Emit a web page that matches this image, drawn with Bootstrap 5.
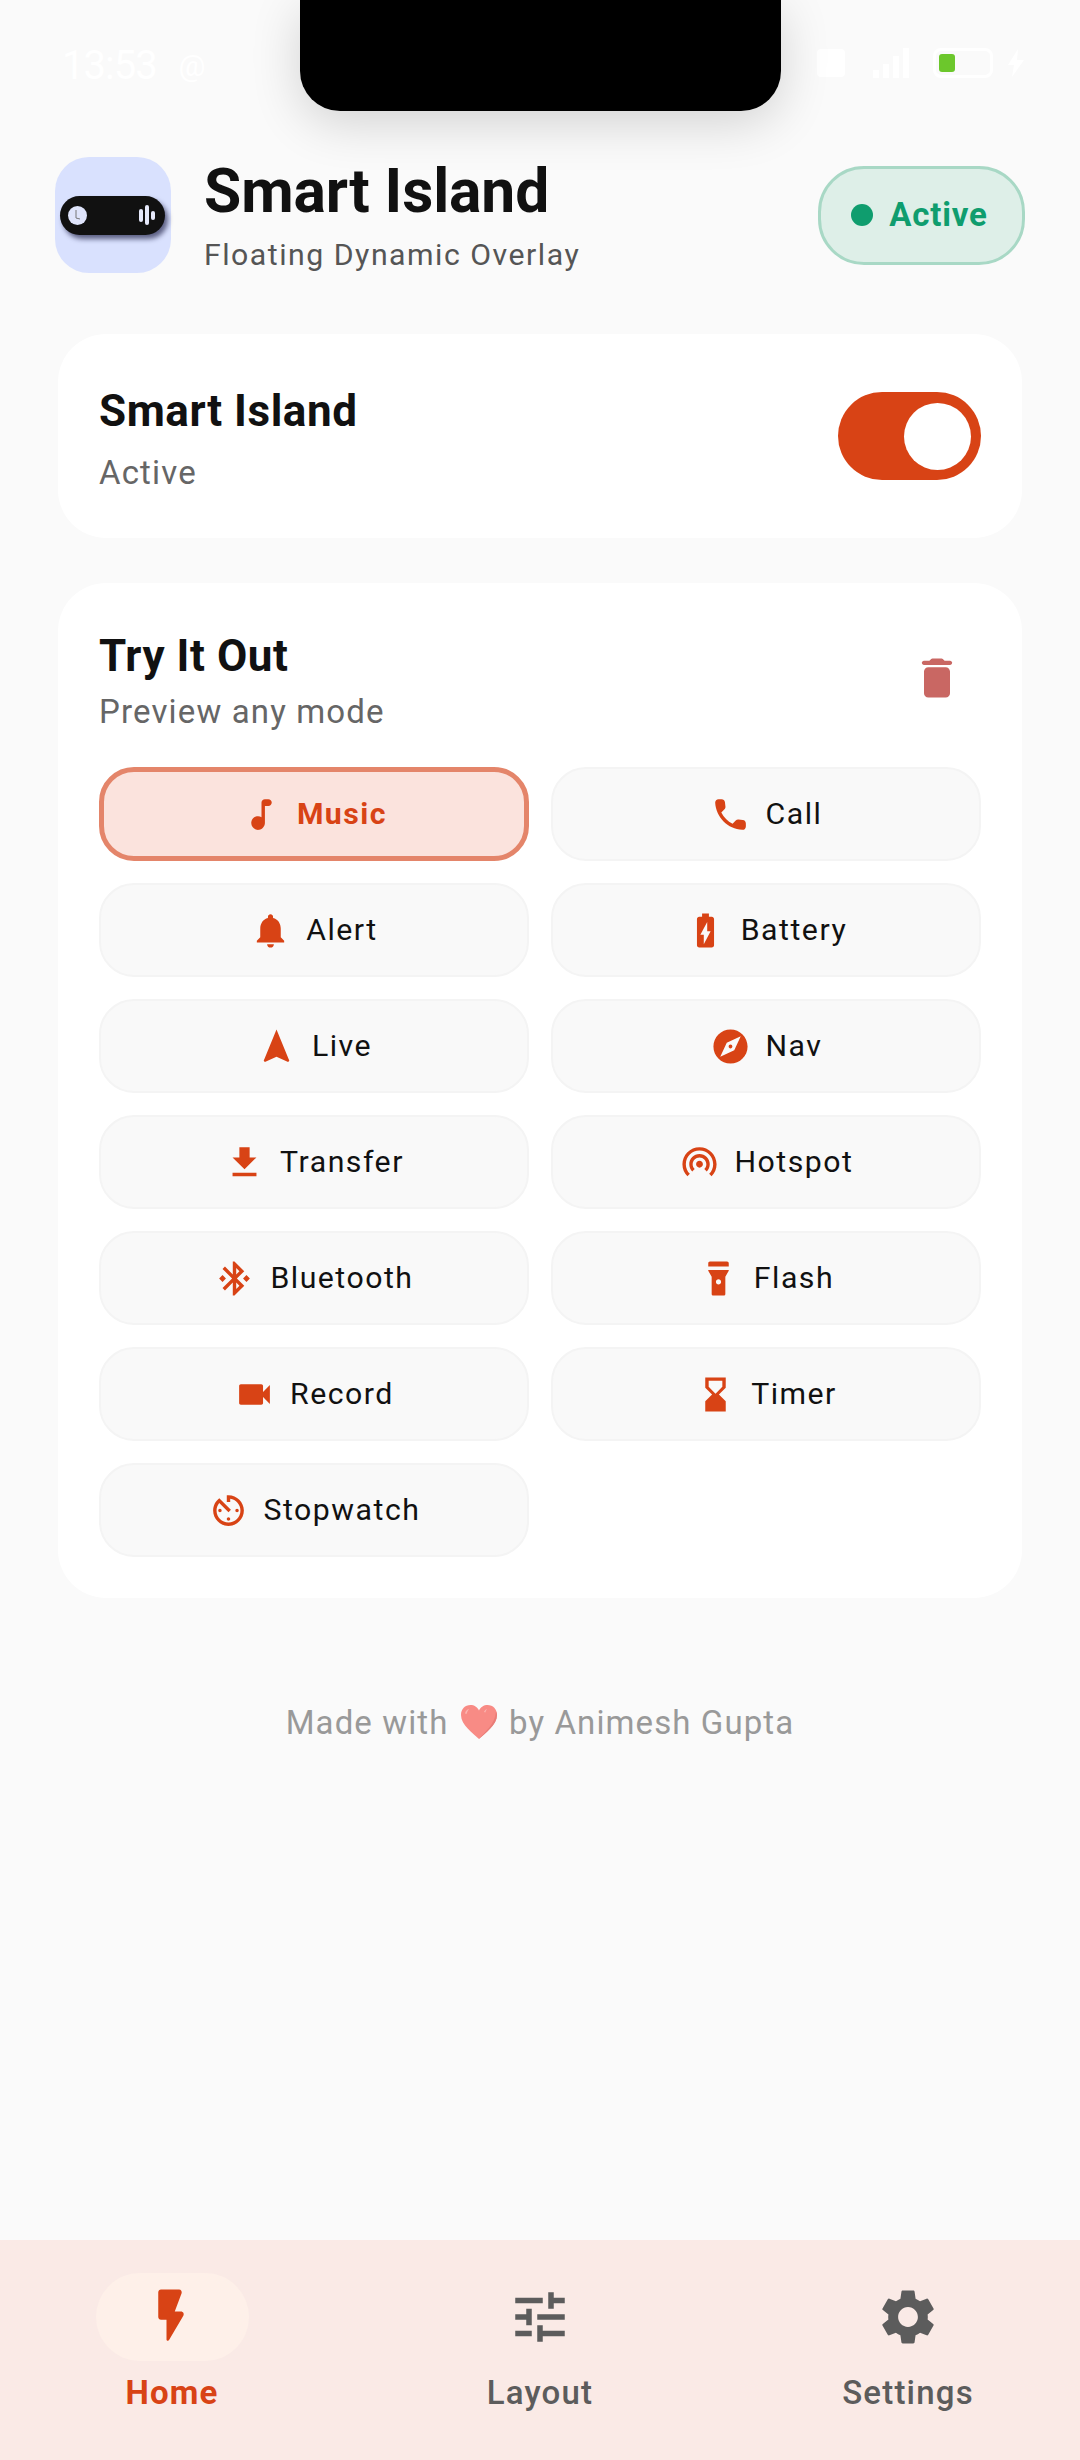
<!DOCTYPE html>
<html lang="en">
<head>
    <meta charset="UTF-8">
    <meta name="viewport" content="width=device-width, initial-scale=1.0">
    <title>Smart Island</title>
    <link href="https://cdn.jsdelivr.net/npm/bootstrap@5.3.0/dist/css/bootstrap.min.css" rel="stylesheet">
    <style>
        body { background: #fafafa; font-family: Roboto, "Liberation Sans", sans-serif; color: #111; }
        .screen { height: 2460px; overflow: hidden; }
        .status-row { height: 157px; padding: 48px 55px 0 62px; color: #fff; flex-shrink: 0; }
        .status-time { font-size: 40px; line-height: 36px; letter-spacing: -1px; }
        .status-at { font-size: 30px; line-height: 36px; margin-left: 22px; }
        .status-vo { width: 28px; height: 28px; background: #fff; border-radius: 4px; margin-right: 8px; }
        .status-net { width: 62px; height: 30px; margin-right: 18px; }
        .status-batt { width: 60px; height: 30px; border: 3px solid #fff; border-radius: 8px; padding: 3px; }
        .status-fill { width: 16px; height: 100%; background: #6cc72c; border-radius: 3px; }
        .status-bolt { width: 18px; height: 28px; margin-left: 14px; }
        .notch { position: absolute; top: 0; left: 300px; width: 481px; height: 111px; background: #000; border-radius: 0 0 40px 40px; box-shadow: 0 12px 50px rgba(0,0,0,.16); }

        .top-head { padding: 0 55px; height: 116px; margin-bottom: 61px; flex-shrink: 0; }
        .app-logo { width: 116px; height: 116px; background: #d9e1fe; border-radius: 34px; padding: 0 6px 0 5px; flex-shrink: 0; }
        .logo-pill { width: 100%; height: 39px; background: #111; border-radius: 20px; padding: 0 10px 0 8px; box-shadow: 3px 4px 5px rgba(10,10,50,.6); }
        .logo-dot { width: 19px; height: 19px; }
        .logo-bar { width: 4px; background: #e6e9fb; border-radius: 2px; margin-left: 2px; }
        .app-title { font-size: 60.5px; line-height: 66px; font-weight: 700; letter-spacing: -.1px; margin: 0; color: #111; }
        .app-sub { font-size: 30.25px; line-height: 32px; color: #555; letter-spacing: 1.5px; margin-top: 14px; }
        .head-text { margin-left: 33px; margin-top: -1px; }
        .state-pill { width: 207px; height: 99px; background: #deefe8; border: 3px solid #a8d8c5; border-radius: 46px; color: #0f9d6e; font-weight: 700; font-size: 33px; letter-spacing: .8px; gap: 16px; padding-right: 4px; }
        .state-dot { width: 22px; height: 22px; background: #0f9d6e; border-radius: 50%; }

        .panel { margin: 0 58px; border: 0; border-radius: 48px; background: #fff; flex-shrink: 0; }
        .panel-switch { height: 204px; margin-bottom: 45px; padding: 6px 41px 0; }
        .panel-modes { height: 1015px; padding: 47px 41px 0; }
        .panel-title { font-size: 44px; line-height: 52px; font-weight: 700; margin: 0; letter-spacing: .55px; color: #111; }
        .panel-sub { font-size: 33px; line-height: 40px; color: #666; letter-spacing: 1.15px; }
        .sub-tight { margin-top: 10px; }
        .big-toggle { width: 143px; height: 88px; background: #d84315; border-radius: 44px; padding-right: 10px; margin-top: -6px; }
        .big-knob { width: 67px; height: 67px; background: #fff; border-radius: 50%; }
        .trash-icon { width: 52px; height: 52px; fill: #c96763; margin: 0 18px 6px 0; }

        .mode-grid { --bs-gutter-x: 22px; --bs-gutter-y: 22px; margin-top: 13px; }
        .mode-btn { width: 100%; height: 94px; background: #f9f9f9; border: 2px solid #f4f4f4; border-radius: 35px; color: #111; font-size: 30.25px; letter-spacing: 1.5px; gap: 15px; padding: 0; }
        .mode-btn.picked { background: #fbe3dd; border: 5px solid #e4856a; color: #d84315; font-weight: 700; }
        .mode-btn svg { width: 41px; height: 41px; fill: #d84315; flex-shrink: 0; }

        .made-by { text-align: center; color: #999; font-size: 33px; line-height: 40px; letter-spacing: 1.1px; margin-top: 105px; }
        .made-by svg { width: 38px; height: 36px; vertical-align: -6px; margin: 0 2px; }

        .tab-bar { height: 220px; background: #faeae6; padding: 33px 72px 0; flex-shrink: 0; }
        .tab-item { width: 200px; color: #5c5c5c; font-size: 33px; font-weight: 500; letter-spacing: 1.2px; line-height: 40px; }
        .tab-item.on { color: #d84315; font-weight: 700; }
        .tab-icon { width: 153px; height: 88px; border-radius: 44px; margin-bottom: 12px; }
        .tab-item.on .tab-icon { background: #fef0e9; }
        .tab-icon svg { width: 66px; height: 66px; fill: currentColor; }
    </style>
</head>
<body>
    <div class="screen d-flex flex-column position-relative">
        <!-- status bar, white on near white in the capture -->
        <div class="status-row d-flex justify-content-between align-items-start">
            <div class="d-flex"><span class="status-time">13:53</span><span class="status-at">@</span></div>
            <div class="d-flex align-items-center">
                <span class="status-vo"></span>
                <svg class="status-net" viewBox="0 0 62 30" fill="#fff"><rect x="20" y="22" width="6" height="8"/><rect x="30" y="16" width="6" height="14"/><rect x="40" y="8" width="6" height="22"/><rect x="50" y="0" width="6" height="30"/></svg>
                <span class="status-batt d-block"><span class="status-fill d-block"></span></span>
                <svg class="status-bolt" viewBox="0 0 18 28" fill="#fff"><path d="M11 0L1 16h6L5 28 17 11h-7z"/></svg>
            </div>
        </div>
        <div class="notch"></div>

        <!-- header -->
        <div class="top-head d-flex align-items-center">
            <div class="app-logo d-flex align-items-center">
                <div class="logo-pill d-flex align-items-center justify-content-between">
                    <svg class="logo-dot" viewBox="0 0 19 19"><circle cx="9.500" cy="9.500" r="9.500" fill="#dfe4fb"/><path d="M8 4v8l4 1" fill="none" stroke="#777" stroke-width="1"/></svg>
                    <span class="d-flex align-items-center">
                        <span class="logo-bar" style="height:13px"></span>
                        <span class="logo-bar" style="height:20px"></span>
                        <span class="logo-bar" style="height:9px"></span>
                    </span>
                </div>
            </div>
            <div class="head-text flex-grow-1">
                <h1 class="app-title">Smart Island</h1>
                <div class="app-sub">Floating Dynamic Overlay</div>
            </div>
            <div class="state-pill d-flex align-items-center justify-content-center">
                <span class="state-dot"></span>Active
            </div>
        </div>

        <!-- service switch -->
        <div class="card panel panel-switch d-flex flex-row align-items-center justify-content-between">
            <div>
                <h2 class="panel-title">Smart Island</h2>
                <div class="panel-sub mt-3">Active</div>
            </div>
            <div class="big-toggle d-flex align-items-center justify-content-end"><span class="big-knob"></span></div>
        </div>

        <!-- preview buttons -->
        <div class="card panel panel-modes d-block">
            <div class="d-flex align-items-center justify-content-between">
                <div>
                    <h2 class="panel-title">Try It Out</h2>
                    <div class="panel-sub sub-tight">Preview any mode</div>
                </div>
                <svg class="trash-icon" viewBox="0 0 24 24"><path d="M6 19c0 1.100.9 2 2 2h8c1.100 0 2-.9 2-2V9c0-1.100-.9-2-2-2H8c-1.100 0-2 .9-2 2v10zM18 4h-2.500l-.71-.71c-.18-.18-.44-.29-.7-.29H9.910c-.26 0-.52.110-.7.29L8.500 4H6c-.55 0-1 .45-1 1s.45 1 1 1h12c.55 0 1-.45 1-1s-.45-1-1-1z"/></svg>
            </div>
            <div class="row row-cols-2 mode-grid">
                <div class="col"><button class="btn mode-btn picked d-flex align-items-center justify-content-center"><svg viewBox="0 0 24 24"><path d="M12 5v8.550c-.94-.54-2.100-.75-3.330-.32-1.340.48-2.370 1.670-2.610 3.070-.46 2.740 1.860 5.080 4.590 4.650 1.960-.31 3.350-2.110 3.350-4.100V7h2c1.100 0 2-.9 2-2s-.9-2-2-2h-2c-1.100 0-2 .9-2 2z"/></svg>Music</button></div>
                <div class="col"><button class="btn mode-btn d-flex align-items-center justify-content-center"><svg viewBox="0 0 24 24"><path d="M19.230 15.260l-2.540-.29c-.61-.07-1.210.14-1.640.57l-1.840 1.840c-2.830-1.440-5.150-3.750-6.590-6.590l1.850-1.850c.43-.43.64-1.030.57-1.640l-.29-2.520c-.12-1.010-.97-1.770-1.990-1.770H5.030c-1.130 0-2.070.94-2 2.070.53 8.540 7.360 15.360 15.890 15.890 1.130.07 2.070-.87 2.070-2v-1.730c.01-1.010-.75-1.860-1.760-1.980z"/></svg>Call</button></div>
                <div class="col"><button class="btn mode-btn d-flex align-items-center justify-content-center"><svg viewBox="0 0 24 24"><path d="M12 22c1.100 0 2-.9 2-2h-4c0 1.100.9 2 2 2zm6-6v-5c0-3.070-1.630-5.640-4.500-6.320V4c0-.83-.67-1.500-1.500-1.500s-1.500.67-1.500 1.500v.68C7.640 5.360 6 7.920 6 11v5l-2 2v1h16v-1l-2-2z"/></svg>Alert</button></div>
                <div class="col"><button class="btn mode-btn d-flex align-items-center justify-content-center"><svg viewBox="0 0 24 24"><path d="M15.670 4H14V2h-4v2H8.330C7.600 4 7 4.600 7 5.330v15.330C7 21.400 7.600 22 8.330 22h7.330c.74 0 1.340-.6 1.340-1.330V5.330C17 4.600 16.400 4 15.670 4zM11 20v-5.500H9L13 7v5.500h2L11 20z"/></svg>Battery</button></div>
                <div class="col"><button class="btn mode-btn d-flex align-items-center justify-content-center"><svg viewBox="0 0 24 24"><path d="M12 2L4.500 20.290l.71.71L12 18l6.790 3 .71-.71z"/></svg>Live</button></div>
                <div class="col"><button class="btn mode-btn d-flex align-items-center justify-content-center"><svg viewBox="0 0 24 24"><path d="M12 10.900c-.61 0-1.100.49-1.100 1.100s.49 1.100 1.100 1.100c.61 0 1.100-.49 1.100-1.100s-.49-1.100-1.100-1.100zM12 2C6.480 2 2 6.480 2 12s4.480 10 10 10 10-4.480 10-10S17.520 2 12 2zm2.190 12.190L6 18l3.810-8.190L18 6l-3.810 8.190z"/></svg>Nav</button></div>
                <div class="col"><button class="btn mode-btn d-flex align-items-center justify-content-center"><svg viewBox="0 0 24 24"><path d="M5 20h14v-2H5v2zM19 9h-4V3H9v6H5l7 7 7-7z"/></svg>Transfer</button></div>
                <div class="col"><button class="btn mode-btn d-flex align-items-center justify-content-center"><svg viewBox="0 0 24 24"><path d="M12 11c-1.100 0-2 .9-2 2 0 .55.23 1.050.59 1.410.36.36.86.59 1.410.59s1.050-.23 1.410-.59c.36-.36.59-.86.59-1.410 0-1.100-.9-2-2-2zm6 2c0-3.310-2.690-6-6-6s-6 2.690-6 6c0 1.660.68 3.150 1.760 4.240l1.420-1.420C8.450 15.100 8 14.110 8 13c0-2.210 1.790-4 4-4s4 1.790 4 4c0 1.110-.45 2.100-1.180 2.820l1.420 1.420C17.320 16.150 18 14.660 18 13zM12 3C6.480 3 2 7.480 2 13c0 2.760 1.120 5.260 2.930 7.070l1.420-1.420C4.900 17.210 4 15.210 4 13c0-4.420 3.580-8 8-8s8 3.580 8 8c0 2.210-.9 4.210-2.350 5.650l1.420 1.420C20.880 18.260 22 15.760 22 13c0-5.520-4.480-10-10-10z"/></svg>Hotspot</button></div>
                <div class="col"><button class="btn mode-btn d-flex align-items-center justify-content-center"><svg viewBox="0 0 24 24"><path d="M7 12l-2-2-2 2 2 2 2-2zm10.710-4.290L12 2h-1v7.590L6.410 5 5 6.410 10.590 12 5 17.590 6.410 19 11 14.410V22h1l5.710-5.710-4.300-4.290 4.300-4.290zM13 5.830l1.880 1.880L13 9.590V5.830zm1.880 10.460L13 18.170v-3.760l1.880 1.880zM19 10l-2 2 2 2 2-2-2-2z"/></svg>Bluetooth</button></div>
                <div class="col"><button class="btn mode-btn d-flex align-items-center justify-content-center"><svg viewBox="0 0 24 24"><path d="M6 5h12V3c0-.55-.45-1-1-1H7c-.55 0-1 .45-1 1v2zm0 2v.5L8 11v10c0 .55.45 1 1 1h6c.55 0 1-.45 1-1V11l2-3.500V7H6zm6 8.500c-.83 0-1.500-.67-1.500-1.500s.67-1.500 1.500-1.500 1.500.67 1.500 1.500-.67 1.500-1.500 1.500z"/></svg>Flash</button></div>
                <div class="col"><button class="btn mode-btn d-flex align-items-center justify-content-center"><svg viewBox="0 0 24 24"><path d="M17 10.500V7c0-.55-.45-1-1-1H4c-.55 0-1 .45-1 1v10c0 .55.45 1 1 1h12c.55 0 1-.45 1-1v-3.500l4 4v-11l-4 4z"/></svg>Record</button></div>
                <div class="col"><button class="btn mode-btn d-flex align-items-center justify-content-center"><svg viewBox="0 0 24 24"><path d="M18 22l-.01-6L14 12l3.990-4.010L18 2H6v6l4 4-4 3.990V22h12zM8 7.500V4h8v3.500l-4 4-4-4z"/></svg>Timer</button></div>
                <div class="col"><button class="btn mode-btn d-flex align-items-center justify-content-center"><svg viewBox="0 0 24 24"><path d="M11 17c0 .55.45 1 1 1s1-.45 1-1-.45-1-1-1-1 .45-1 1zm0-14v4h2V5.080c3.390.49 6 3.390 6 6.920 0 3.870-3.130 7-7 7s-7-3.130-7-7c0-1.680.59-3.220 1.580-4.420L12 13l1.410-1.410-6.800-6.800v.02C4.420 6.450 3 9.050 3 12c0 4.970 4.030 9 9 9 4.970 0 9-4.030 9-9s-4.030-9-9-9h-1zm7 9c0-.55-.45-1-1-1s-1 .45-1 1 .45 1 1 1 1-.45 1-1zM6 12c0 .55.45 1 1 1s1-.45 1-1-.45-1-1-1-1 .45-1 1z"/></svg>Stopwatch</button></div>
            </div>
        </div>

        <div class="made-by flex-grow-1">Made with <svg viewBox="0 0 38 36"><path fill="#f88b85" d="M19 35C13 29 1 21 1 11 1 5 5 1 10.500 1 14 1 17.500 3 19 6.500 20.500 3 24 1 27.500 1 33 1 37 5 37 11 37 21 25 29 19 35z"/><path fill="#e87d78" d="M36 7.500c.6 1.100 1 2.200 1 3.500 0 10-12 18-18 24 5-7 16-14 17-27.500z"/><path fill="#fbb5b0" d="M5 9.500c.5-2.500 2-4 4-4.500-1.200 1.800-2 3.200-2.500 5zM24 8c.5-1.500 1.500-2.500 3-3-.8 1.300-1.300 2.200-1.700 3.500z"/></svg> by Animesh Gupta</div>

        <!-- bottom tabs -->
        <div class="tab-bar d-flex justify-content-between text-center">
            <div class="tab-item on d-flex flex-column align-items-center">
                <div class="tab-icon d-flex align-items-center justify-content-center"><svg viewBox="0 0 24 24"><path d="M7 3v9c0 .55.45 1 1 1h2v7.150c0 .51.67.69.93.25l5.190-8.900c.39-.67-.09-1.500-.86-1.500H13l2.490-6.650C15.740 2.700 15.260 2 14.560 2H8c-.55 0-1 .45-1 1z"/></svg></div>
                Home
            </div>
            <div class="tab-item d-flex flex-column align-items-center">
                <div class="tab-icon d-flex align-items-center justify-content-center"><svg viewBox="0 0 24 24"><path d="M3 17v2h6v-2H3zM3 5v2h10V5H3zm10 16v-2h8v-2h-8v-2h-2v6h2zM7 9v2H3v2h4v2h2V9H7zm14 4v-2H11v2h10zm-6-4h2V7h4V5h-4V3h-2v6z"/></svg></div>
                Layout
            </div>
            <div class="tab-item d-flex flex-column align-items-center">
                <div class="tab-icon d-flex align-items-center justify-content-center"><svg viewBox="0 0 24 24"><path d="M19.140 12.940c.04-.3.06-.61.06-.94 0-.32-.02-.64-.07-.94l2.030-1.580c.18-.14.23-.41.12-.61l-1.920-3.320c-.12-.22-.37-.29-.59-.22l-2.390.96c-.5-.38-1.030-.7-1.620-.94l-.36-2.540c-.04-.24-.24-.41-.48-.41h-3.840c-.24 0-.43.17-.47.41l-.36 2.540c-.59.24-1.130.57-1.620.94l-2.390-.96c-.22-.08-.47 0-.59.22L2.740 8.870c-.12.21-.08.47.12.61l2.030 1.580c-.05.3-.09.63-.09.94s.02.64.07.94l-2.030 1.580c-.18.14-.23.41-.12.61l1.920 3.320c.12.22.37.29.59.22l2.390-.96c.5.38 1.030.7 1.620.94l.36 2.540c.05.24.24.41.48.41h3.840c.24 0 .44-.17.47-.41l.36-2.540c.59-.24 1.130-.56 1.620-.94l2.390.96c.22.08.47 0 .59-.22l1.920-3.320c.12-.22.07-.47-.12-.61l-2.010-1.580zM12 15.600c-1.980 0-3.600-1.620-3.600-3.600s1.620-3.600 3.600-3.600 3.600 1.620 3.600 3.600-1.620 3.600-3.600 3.600z"/></svg></div>
                Settings
            </div>
        </div>
    </div>
    <script src="https://cdn.jsdelivr.net/npm/bootstrap@5.3.0/dist/js/bootstrap.bundle.min.js"></script>
</body>
</html>
